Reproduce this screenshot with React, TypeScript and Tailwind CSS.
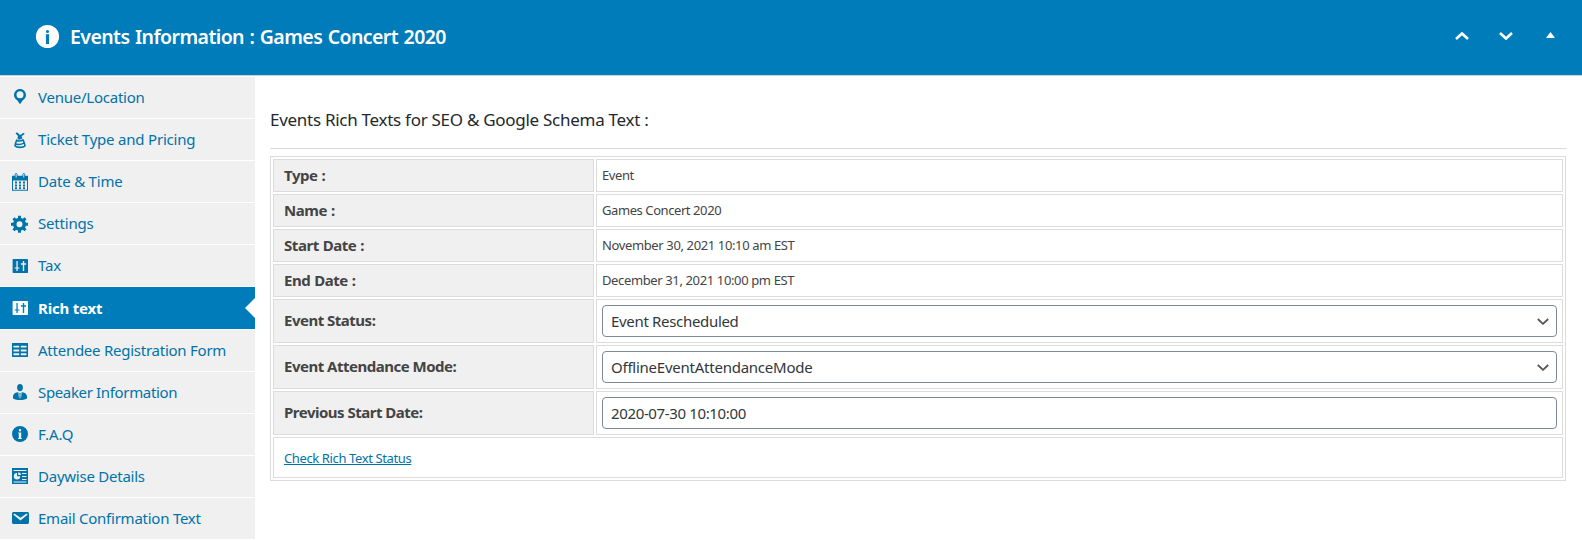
import React from "react";

const ICONS: Record<string, React.ReactNode> = {
  pin: (
    <path d="M10 2C6.700 2 4 4.700 4 8c0 2.200 1.300 4.200 3.200 5.200L10 17.300l2.800-4.100C14.700 12.200 16 10.200 16 8c0-3.300-2.700-6-6-6zm0 2.300a3.500 3.500 0 1 1 0 7 3.500 3.500 0 0 1 0-7z" />
  ),
  ticket: (
    <>
      <path d="M5.500 4.400l1.400-1.100 1.400 1 1.200 1.500L11.500 5.600l1.300-1.700 1.700.3-.3 1.400-1.700.8-1 1 .9 1.600-1.300.3-1.100-1.200-1.800.9-1-.4.900-1.300-.9-1.300z" />
      <path d="M8.200 8l3.200-.2.9 1.800c-1.500.9-3.200 1.100-4.700.6z" />
      <path
        d="M6.700 11.500c2.200.9 4.600.4 6.700-.8M7 10.500C5.700 13.500 5 16 5.100 17c1.600 1.800 8.200 1.800 9.800 0 .1-1.600-.9-4-2-6.500M5.600 15c3 .9 6.300.3 8.600-1.200"
        fill="none"
        stroke="currentColor"
        strokeWidth="1.600"
      />
    </>
  ),
  calendar: (
    <>
      <path
        fillRule="evenodd"
        d="M2 4.800h16v14.900H2zM3 9.500v9.200h14V9.500zM5 10.500h2v2H5zm4 0h2v2H9zm4 0h2v2h-2zM5 13.400h2v2H5zm4 0h2v2H9zm4 0h2v2h-2zM5 16.300h2v1.700H5zm4 0h2v1.700H9zm4 0h2v1.700h-2z"
      />
      <path
        d="M5.200 7V3.300q0-.8.900-.8t.9.800V7zM12.900 7V3.300q0-.8.900-.8t.9.800V7z"
        className="fill-[#f0f0f0]"
        stroke="currentColor"
        strokeWidth=".9"
      />
    </>
  ),
  gear: (
    <path
      transform="translate(0 .8)"
      d="M18 12h-2.180c-.17.700-.44 1.350-.81 1.930l1.540 1.540-2.100 2.100-1.540-1.540c-.58.360-1.230.630-1.910.790V19H8v-2.180c-.68-.16-1.330-.430-1.910-.790l-1.540 1.540-2.120-2.120 1.540-1.540c-.36-.58-.63-1.230-.79-1.910H1V9.030h2.170c.16-.7.440-1.350.8-1.940L2.430 5.550l2.100-2.100 1.540 1.540c.58-.37 1.240-.64 1.930-.81V2h3v2.180c.68.160 1.330.430 1.910.790l1.540-1.540 2.120 2.120-1.540 1.540c.36.590.64 1.240.8 1.940H18V12zm-8.500 1.500a3 3 0 1 0 0-6 3 3 0 0 0 0 6z"
    />
  ),
  sliders: (
    <path
      fillRule="evenodd"
      d="M2.600 4.500l.5-.5H17.500l.5.500v13l-.5.500H3.100l-.5-.5zM6.400 6v6.400H4.700v1.200h1.700V16h1.300v-2.400h1.700v-1.200H7.700V6zM12.800 6v2.200h-1.900v1.500h1.900V16h1.400V9.700h1.900V8.200h-1.900V6z"
    />
  ),
  table: (
    <path
      fillRule="evenodd"
      d="M2 3h16v14H2zM3.500 5.700v1.900h5.700V5.700zM10.800 5.700v1.900h5.700V5.700zM3.500 9.500v1.900h5.700V9.500zM10.800 9.500v1.900h5.700V9.500zM3.500 13.300v1.900h5.700v-1.900zM10.800 13.300v1.900h5.700v-1.900z"
    />
  ),
  person: (
    <>
      <ellipse cx="10" cy="5.600" rx="2.900" ry="3.700" />
      <path
        fillRule="evenodd"
        d="M7.400 10.200L10 11.200l2.600-1c2.700.5 4.400 2 4.400 4.200v1.700c0 .3-.1.500-.4.700C15 17.700 12.500 18 10 18s-5-.3-6.600-1.200c-.3-.2-.4-.4-.4-.7v-1.700c0-2.200 1.700-3.700 4.400-4.200zM8.400 11l.6 5.500h2l.6-5.500L10 11.600z"
      />
      <path d="M9.300 11.300h1.400l-.3 1.500.3 3.700v1H9.300v-1l.3-3.700z" />
    </>
  ),
  info: (
    <path fillRule="evenodd" d="M10 2a8 8 0 1 1 0 16 8 8 0 0 1 0-16zm0 3a1.200 1.200 0 1 0 0 2.400A1.200 1.200 0 0 0 10 5zm1.200 3.600H8.200v1h.6v4.400h-.6v1h3.600v-1h-.6z" />
  ),
  infoBold: (
    <path fillRule="evenodd" d="M10 2a8 8 0 1 1 0 16 8 8 0 0 1 0-16zm0 3.500a1.050 1.050 0 1 0 0 2.100 1.050 1.050 0 0 0 0-2.100zM8.900 8.400v6.800h2.200V8.400z" />
  ),
  analytics: (
    <path
      fillRule="evenodd"
      d="M18 18V2H2v16h16zM16.500 5H3.500V4h13v1zM7 7v3.200h3.200A3.200 3.200 0 1 1 7 7zm1.200-.7A3 3 0 0 1 11 9.100H8.200zM16.500 8H12V7h4.500v1zm0 3H12v-1h4.500v1zm0 3H12v-1h4.500v1zm0 2.500h-13v-1h13v1z"
    />
  ),
  email: (
    <path d="M3.870 4h13.250C18.370 4 19 4.590 19 5.790v8.420c0 1.190-.63 1.790-1.880 1.790H3.870c-1.250 0-1.880-.6-1.880-1.790V5.790c0-1.200.63-1.790 1.880-1.790zm6.620 8.600l6.740-5.530c.24-.2.430-.66.130-1.070-.29-.41-.82-.42-1.170-.17l-5.700 3.860L4.800 5.830c-.35-.25-.88-.24-1.170.17-.3.410-.11.870.130 1.070z" />
  ),
};

function Icon({ name, className }: { name: string; className: string }) {
  return (
    <svg viewBox="0 0 20 20" fill="currentColor" className={className}>
      {ICONS[name]}
    </svg>
  );
}

const TABS = [
  { label: "Venue/Location", icon: "pin", tracking: "tracking-[-0.24px]" },
  { label: "Ticket Type and Pricing", icon: "ticket", tracking: "tracking-[-0.2px]" },
  { label: "Date & Time", icon: "calendar", tracking: "tracking-[-0.2px]" },
  { label: "Settings", icon: "gear", tracking: "tracking-[-0.2px]" },
  { label: "Tax", icon: "sliders", tracking: "tracking-[-0.1px]" },
  { label: "Rich text", icon: "sliders", tracking: "tracking-[-0.2px]", active: true },
  { label: "Attendee Registration Form", icon: "table", tracking: "tracking-[-0.25px]" },
  { label: "Speaker Information", icon: "person", tracking: "tracking-[-0.35px]" },
  { label: "F.A.Q", icon: "info", tracking: "tracking-[0px]" },
  { label: "Daywise Details", icon: "analytics", tracking: "tracking-[-0.24px]" },
  { label: "Email Confirmation Text", icon: "email", tracking: "tracking-[-0.24px]" },
];

const DETAILS = [
  { label: "Type :", value: "Event", tracking: "tracking-[-0.4px]" },
  { label: "Name :", value: "Games Concert 2020", tracking: "tracking-[-0.42px]" },
  { label: "Start Date :", value: "November 30, 2021 10:10 am EST", tracking: "tracking-[-0.37px]" },
  { label: "End Date :", value: "December 31, 2021 10:00 pm EST", tracking: "tracking-[-0.37px]" },
];

const FIELDS = [
  { label: "Event Status:", value: "Event Rescheduled", select: true, tracking: "tracking-[-0.32px]" },
  { label: "Event Attendance Mode:", value: "OfflineEventAttendanceMode", select: true, tracking: "tracking-[-0.24px]" },
  { label: "Previous Start Date:", value: "2020-07-30 10:10:00", select: false, tracking: "tracking-[-0.36px]" },
];

function LabelCell({ children, className }: { children: React.ReactNode; className: string }) {
  return (
    <div
      className={`flex w-[321px] shrink-0 items-center border border-[#dcdcdc] bg-[#f0f0f0] pl-[10px] text-[15px] font-bold text-[#444] ${className}`}
    >
      <span>{children}</span>
    </div>
  );
}

export default function App() {
  return (
    <div className="flex h-[540px] w-[1582px] flex-col overflow-hidden bg-white font-['Noto_Sans',sans-serif]">
      <header className="flex h-[76px] shrink-0 items-center justify-between border-b border-[#ccd0d4] bg-[#007cba] pr-[27px] pb-[3px] pl-[33px] text-white">
        <div className="flex items-center">
          <Icon name="infoBold" className="size-[29px]" />
          <h1 className="ml-[8px] pt-px text-[19.5px] leading-none font-semibold tracking-[-0.58px] [word-spacing:1px] whitespace-nowrap">
            Events Information : Games Concert 2020
          </h1>
        </div>
        <div className="flex items-center">
          <svg viewBox="0 0 14 8" className="h-2 w-[14px]" fill="none" stroke="currentColor" strokeWidth="2.600">
            <path d="M1 7l6-5.500L13 7" />
          </svg>
          <svg viewBox="0 0 14 8" className="ml-[30px] h-2 w-[14px]" fill="none" stroke="currentColor" strokeWidth="2.600">
            <path d="M1 1l6 5.500L13 1" />
          </svg>
          <svg viewBox="0 0 9 6" className="mb-[2px] ml-[33px] h-[6px] w-[9px]" fill="currentColor">
            <path d="M0 6l4.500-6L9 6z" />
          </svg>
        </div>
      </header>
      <div className="flex flex-1">
        <nav className="flex w-[255px] shrink-0 flex-col pt-px">
          {TABS.map((tab) => (
            <div
              key={tab.label}
              className={
                tab.active
                  ? "mb-px flex h-[42px] items-center justify-between bg-[#007cba] pl-[10px] font-bold text-white"
                  : "mb-px flex h-[41px] items-center justify-between bg-[#f0f0f0] pb-px pl-[10px] text-[#0073aa]"
              }
            >
              <div className="flex items-center">
                <Icon name={tab.icon} className={tab.active ? "-mt-0.5 size-5" : "size-5"} />
                <span className={`ml-2 text-[15px] leading-5 whitespace-nowrap ${tab.tracking}`}>{tab.label}</span>
              </div>
              {tab.active && (
                <svg viewBox="0 0 10 20" className="h-5 w-[10px]" fill="currentColor">
                  <path d="M10 0v20L0 10z" />
                </svg>
              )}
            </div>
          ))}
        </nav>
        <main className="flex flex-1 flex-col pr-[15px] pl-[15px]">
          <h2 className="flex h-[73px] items-center border-b border-[#dcdcdc] pt-4 text-[17px] tracking-[-0.28px] text-[#23282d]">
            <span>Events Rich Texts for SEO &amp; Google Schema Text :</span>
          </h2>
          <div className="mt-[7px] flex w-[1296px] flex-col gap-[2px] border border-[#dcdcdc] p-[2px]">
            {DETAILS.map((row) => (
              <div key={row.label} className="flex h-[33px] gap-[2px]">
                <LabelCell className="tracking-[-0.45px] [word-spacing:0.5px]">{row.label}</LabelCell>
                <div
                  className={`flex flex-1 items-center border border-[#dcdcdc] pl-[5px] text-[13px] text-[#444] ${row.tracking}`}
                >
                  <span>{row.value}</span>
                </div>
              </div>
            ))}
            {FIELDS.map((row) => (
              <div key={row.label} className="flex h-[44px] gap-[2px]">
                <LabelCell className="pb-0.5 tracking-[-0.5px]">{row.label}</LabelCell>
                <div className="flex-1 border border-[#dcdcdc] p-[5px]">
                  <div
                    className={`flex h-8 items-center justify-between rounded-[4px] border border-[#7e8993] pr-[7px] pl-2 text-[15px] text-[#32373c] ${row.tracking}`}
                  >
                    <span>{row.value}</span>
                    {row.select && (
                      <svg viewBox="0 0 12 7" className="h-[7px] w-3" fill="none" stroke="#555" strokeWidth="1.800">
                        <path d="M.8 1L6 5.800 11.200 1" />
                      </svg>
                    )}
                  </div>
                </div>
              </div>
            ))}
            <div className="flex h-[41px] items-center border border-[#dcdcdc] pt-0.5 pl-[10px]">
              <a href="#" className="text-[13px] tracking-[-0.38px] text-[#0073aa] underline">
                Check Rich Text Status
              </a>
            </div>
          </div>
        </main>
      </div>
    </div>
  );
}
